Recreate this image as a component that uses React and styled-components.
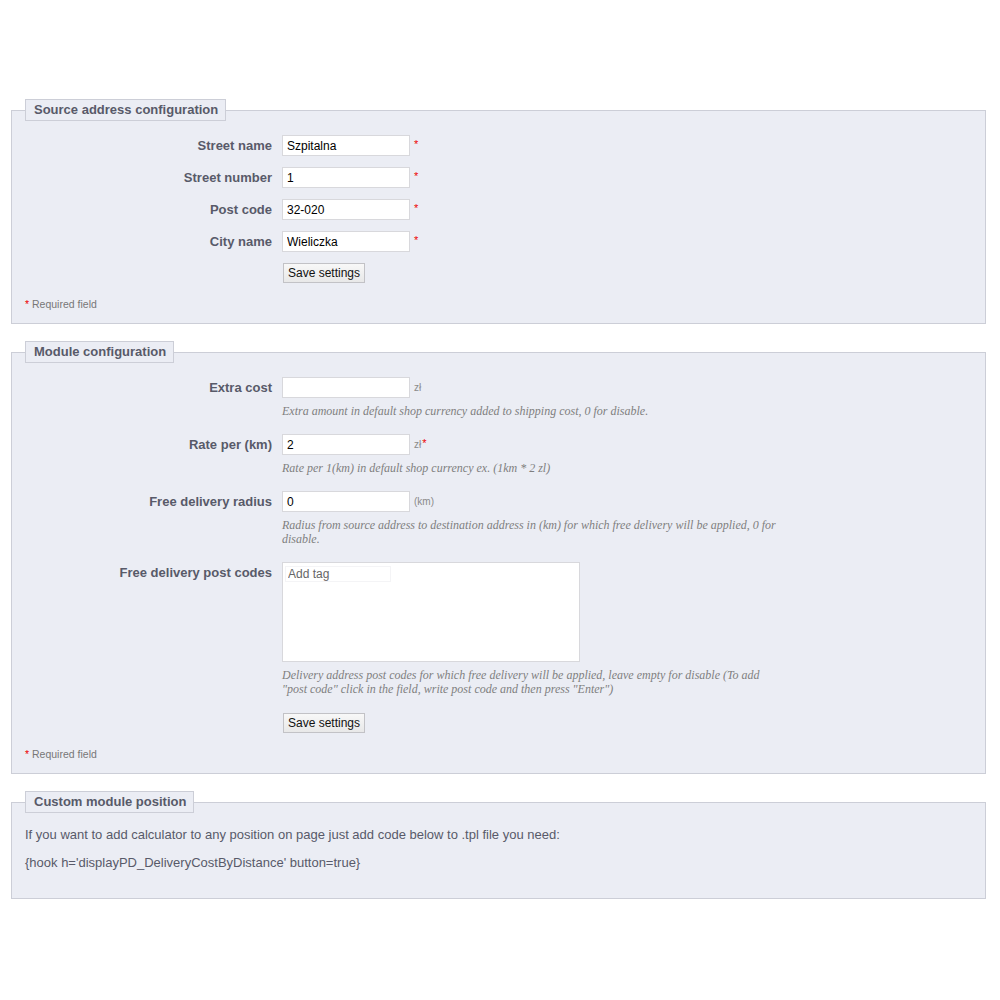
import React from 'react';
import styled, { createGlobalStyle } from 'styled-components';

const GlobalStyle = createGlobalStyle`
    html, body {
        margin: 0;
        padding: 0;
        background: #fff;
    }
    body {
        font-family: "Liberation Sans", Arial, sans-serif;
        font-size: 12px;
        color: #585a69;
    }
`;

const Page = styled.div`
    width: 1000px;
    height: 1000px;
    padding: 99px 14px 0 11px;
    box-sizing: border-box;
    display: flex;
    flex-direction: column;
    gap: 17px;
`;

const Fieldset = styled.fieldset`
    margin: 0;
    min-width: 0;
    background: #ebedf4;
    border: 1px solid #ccced7;
    padding: ${props => props.$pad || '14px 13px 13px 13px'};
`;

const Legend = styled.legend`
    background: #ebedf4;
    border: 1px solid #ccced7;
    padding: 3px 7px 3px 8px;
    font-weight: bold;
    font-size: 13px;
    line-height: 14px;
    color: #585a69;
`;

const Form = styled.div`
    display: grid;
    grid-template-columns: 247px 1fr;
    column-gap: 10px;
    align-items: start;
`;

const Label = styled.label`
    text-align: right;
    font-weight: bold;
    font-size: 13px;
    line-height: 21px;
    color: #585a69;
    white-space: nowrap;
`;

const Field = styled.div`
    padding-bottom: ${props => props.$gap || 11}px;
`;

const InputLine = styled.div`
    display: flex;
    align-items: center;
`;

const TextInput = styled.input`
    width: 128px;
    height: 21px;
    box-sizing: border-box;
    border: 1px solid #d8d8dc;
    background: #fff;
    padding: 1px 4px;
    font-family: "Liberation Sans", Arial, sans-serif;
    font-size: 12px;
    color: #000;
    outline: none;
`;

const Unit = styled.span`
    margin-left: 4px;
    font-size: 10px;
    line-height: 14px;
    color: #8a8a8a;
`;

const Star = styled.span`
    align-self: ${props => (props.$tight ? 'center' : 'flex-start')};
    color: #e00;
    font-size: 11px;
    line-height: 14px;
    margin-left: ${props => (props.$tight ? 1 : 4)}px;
    margin-top: ${props => (props.$tight ? -4 : 2)}px;
`;

const Hint = styled.p`
    margin: 6px 0 0 0;
    max-width: 500px;
    font-family: Georgia, "Liberation Serif", serif;
    font-style: italic;
    font-size: 12px;
    line-height: 14px;
    color: #7f7f7f;
`;

const TagBox = styled.div`
    width: 298px;
    height: 100px;
    box-sizing: border-box;
    border: 1px solid #d8d8dc;
    background: #fff;
    padding: 3px 2px;
`;

const TagInput = styled.input`
    width: 100px;
    border: 1px solid #f4f4f6;
    background: #fff;
    padding: 0 2px;
    font-family: "Liberation Sans", Arial, sans-serif;
    font-size: 12px;
    line-height: 14px;
    color: #666;
    outline: none;
    &::placeholder {
        color: #666;
    }
`;

const Button = styled.button`
    margin-left: 1px;
    height: 20px;
    padding: 0 4px;
    border: 1px solid #c2c2c6;
    background: linear-gradient(#f8f8f8, #e8e8e8);
    font-family: "Liberation Sans", Arial, sans-serif;
    font-size: 12px;
    color: #111;
    cursor: pointer;
`;

const Required = styled.div`
    font-size: 10.5px;
    color: #777;
    margin-top: ${props => props.$top || 13}px;
`;

const RedMark = styled.span`
    color: #e00;
`;

const Text = styled.p`
    margin: ${props => props.$top || 0}px 0 0 0;
    font-size: 13px;
    line-height: 15px;
    color: #585a69;
`;

const addressFields = [
    { label: 'Street name', value: 'Szpitalna' },
    { label: 'Street number', value: '1' },
    { label: 'Post code', value: '32-020' },
    { label: 'City name', value: 'Wieliczka' },
];

const moduleFields = [
    {
        label: 'Extra cost',
        value: '',
        unit: 'zł',
        hint: 'Extra amount in default shop currency added to shipping cost, 0 for disable.',
    },
    {
        label: 'Rate per (km)',
        value: '2',
        unit: 'zł',
        required: true,
        hint: 'Rate per 1(km) in default shop currency ex. (1km * 2 zl)',
    },
    {
        label: 'Free delivery radius',
        value: '0',
        unit: '(km)',
        hint: 'Radius from source address to destination address in (km) for which free delivery will be applied, 0 for disable.',
    },
];

const RequiredNote = ({ top }) => (
    <Required $top={top}>
        <RedMark>*</RedMark> Required field
    </Required>
);

const App = () => {
    return (
        <>
            <GlobalStyle />
            <Page>
                <Fieldset>
                    <Legend>Source address configuration</Legend>
                    <Form>
                        {addressFields.map(item => (
                            <React.Fragment key={item.label}>
                                <Label>{item.label}</Label>
                                <Field>
                                    <InputLine>
                                        <TextInput defaultValue={item.value} />
                                        <Star>*</Star>
                                    </InputLine>
                                </Field>
                            </React.Fragment>
                        ))}
                        <span />
                        <Field $gap={0}>
                            <Button>Save settings</Button>
                        </Field>
                    </Form>
                    <RequiredNote top={4} />
                </Fieldset>

                <Fieldset>
                    <Legend>Module configuration</Legend>
                    <Form>
                        {moduleFields.map(item => (
                            <React.Fragment key={item.label}>
                                <Label>{item.label}</Label>
                                <Field $gap={16}>
                                    <InputLine>
                                        <TextInput defaultValue={item.value} />
                                        <Unit>{item.unit}</Unit>
                                        {item.required && <Star $tight>*</Star>}
                                    </InputLine>
                                    <Hint>{item.hint}</Hint>
                                </Field>
                            </React.Fragment>
                        ))}
                        <Label>Free delivery post codes</Label>
                        <Field $gap={17}>
                            <TagBox>
                                <TagInput placeholder="Add tag" />
                            </TagBox>
                            <Hint>
                                Delivery address post codes for which free delivery will be applied, leave empty for disable (To add "post code" click in the field, write post code and then press "Enter")
                            </Hint>
                        </Field>
                        <span />
                        <Field $gap={0}>
                            <Button>Save settings</Button>
                        </Field>
                    </Form>
                    <RequiredNote top={4} />
                </Fieldset>

                <Fieldset $pad="2px 13px 28px 13px">
                    <Legend>Custom module position</Legend>
                    <Text $top={12}>If you want to add calculator to any position on page just add code below to .tpl file you need:</Text>
                    <Text $top={13}>{"{hook h='displayPD_DeliveryCostByDistance' button=true}"}</Text>
                </Fieldset>
            </Page>
        </>
    );
};

export default App;
